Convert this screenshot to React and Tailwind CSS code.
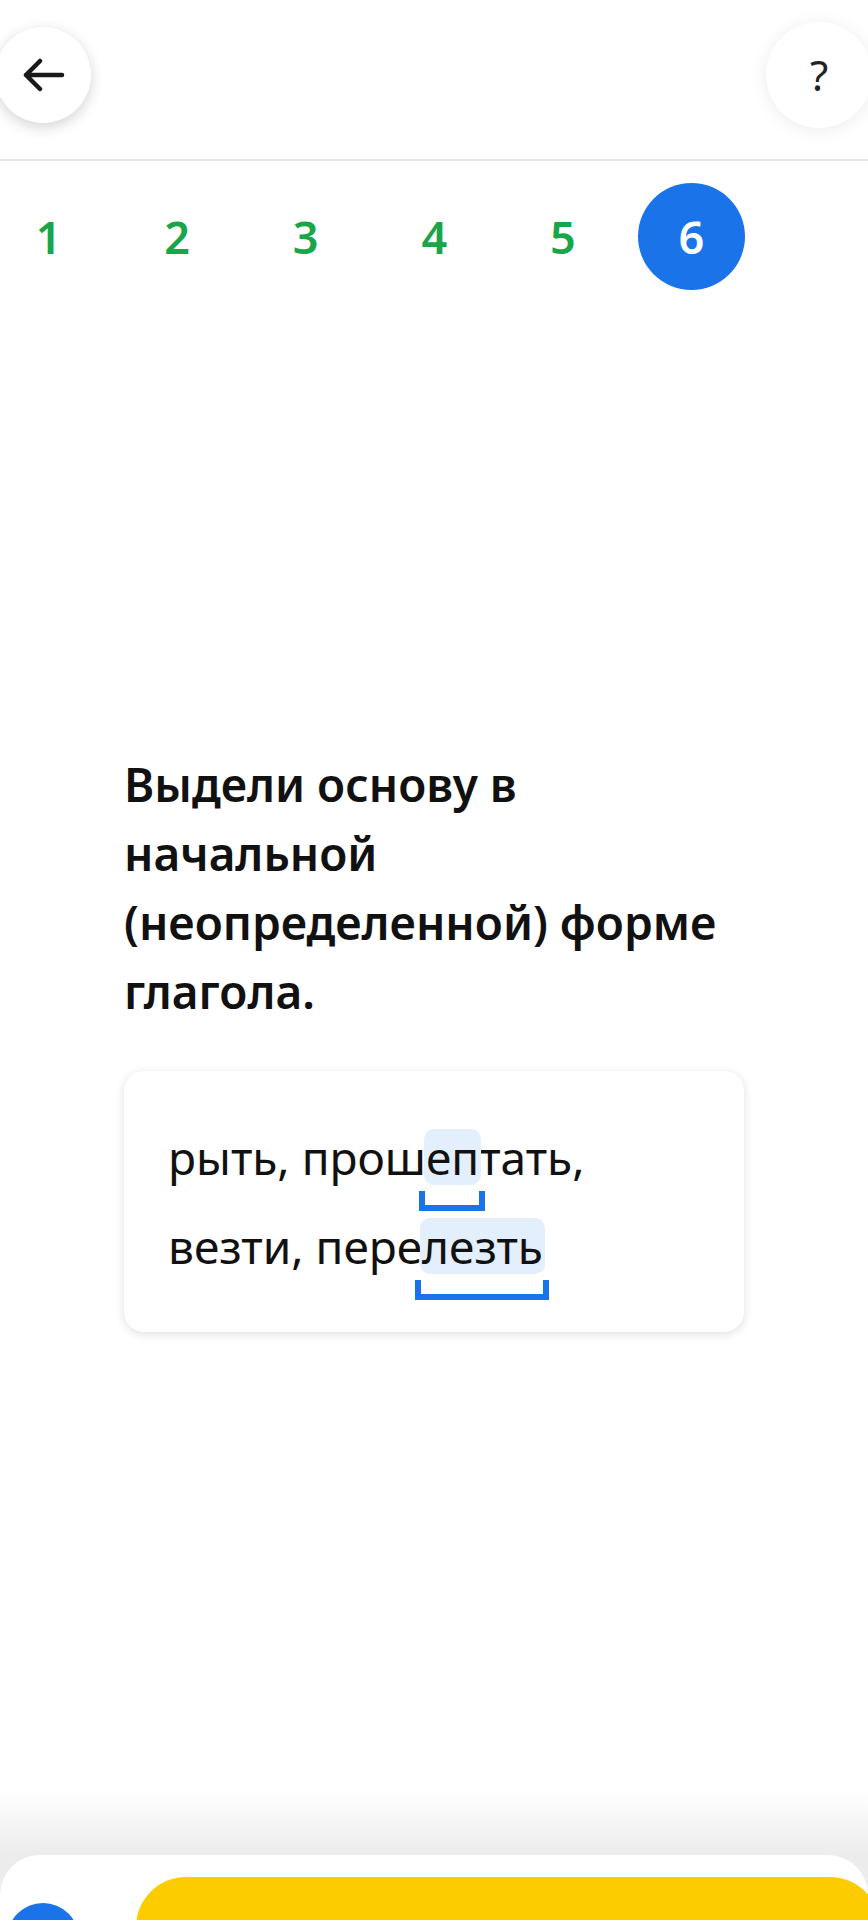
import React from "react";

const steps = [1, 2, 3, 4, 5, 6];
const current = 6;

function ArrowLeftIcon() {
  return (
    <svg width="44" height="34" viewBox="0 0 44 34" fill="none">
      <path
        d="M41 17H5M19 3L5 17l14 14"
        stroke="#1a1a1a"
        strokeWidth="4.5"
        strokeLinecap="round"
        strokeLinejoin="round"
      />
    </svg>
  );
}

// highlighted part of a word with the blue stem bracket under it
function Stem({ children }) {
  return (
    <span className="relative inline-block rounded-[10px] bg-[#e4effd] px-[2px] mx-[-2px]">
      {children}
      <span className="absolute left-[-5px] right-[-4px] top-[calc(100%+6px)] h-[20px] border-x-[6px] border-b-[6px] border-[#1a73e8]" />
    </span>
  );
}

export default function App() {
  return (
    <div
      className="flex h-[1920px] w-full flex-col overflow-hidden bg-white text-[#111]"
      style={{ fontFamily: '"Noto Sans", "Open Sans", sans-serif' }}
    >
      {/* top bar */}
      <div className="flex h-[161px] shrink-0 items-start justify-between border-b-2 border-[#e6e6e6] pt-[27px]">
        <button className="ml-[-5px] flex h-[96px] w-[96px] items-center justify-center rounded-full bg-white shadow-[0_4px_14px_rgba(40,40,60,0.2)]">
          <ArrowLeftIcon />
        </button>
        <button className="mr-[-4px] mt-[-5px] flex h-[106px] w-[106px] items-center justify-center rounded-full bg-white text-[42px] leading-none text-[#222] shadow-[0_2px_18px_rgba(0,0,0,0.08)]">
          ?
        </button>
      </div>

      {/* task tabs */}
      <div className="ml-[-5px] mt-[22px] flex shrink-0 gap-[21.6px]">
        {steps.map((n) => (
          <div
            key={n}
            className={
              n === current
                ? "flex h-[107px] w-[107px] items-center justify-center rounded-full bg-[#1a73e8] text-[45px] font-semibold text-white"
                : "flex h-[107px] w-[107px] items-center justify-center rounded-full text-[45px] font-semibold text-[#19a54a]"
            }
          >
            {n}
          </div>
        ))}
      </div>

      {/* question */}
      <h1 className="ml-[124px] mt-[460px] w-[620px] shrink-0 text-[46px] font-[560] leading-[69px]">
        Выдели основу в начальной (неопределенной) форме глагола.
      </h1>

      <div className="ml-[124px] mt-[45px] w-[620px] shrink-0 rounded-[20px] bg-white px-[44px] py-[58px] shadow-[0_2px_10px_rgba(0,0,0,0.13)]">
        <div className="flex h-[56px] items-center text-[46px] leading-[56px]">
          <span className="whitespace-pre">
            рыть, прош<Stem>еп</Stem>тать,
          </span>
        </div>
        <div className="mt-[33px] flex h-[56px] items-center text-[46px] leading-[56px]">
          <span className="whitespace-pre">
            везти, пере<Stem>лезть</Stem>
          </span>
        </div>
      </div>

      <div className="flex-1" />

      {/* bottom action panel */}
      <div className="h-[65px] shrink-0 bg-gradient-to-b from-white to-[#ececec]" />
      <div className="h-[65px] shrink-0 bg-[#ececec]">
        <div className="flex h-full items-start rounded-t-[40px] bg-white pt-[22px]">
          <div className="ml-[7px] mt-[26px] h-[72px] w-[72px] shrink-0 rounded-full bg-[#1a73e8]" />
          <div className="ml-[57px] h-[100px] w-[744px] shrink-0 rounded-[50px] bg-[#fccc00]" />
        </div>
      </div>
    </div>
  );
}
